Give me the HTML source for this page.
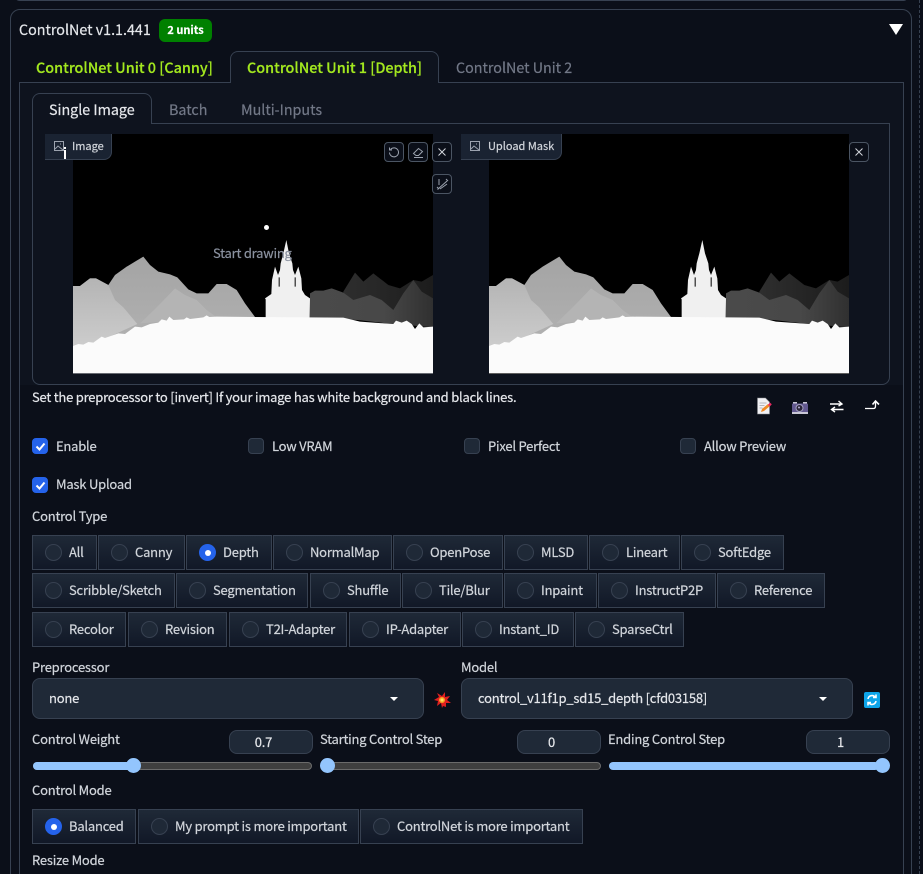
<!DOCTYPE html>
<html><head><meta charset="utf-8"><style>
html,body{margin:0;padding:0;background:#0b0f19;width:923px;height:874px;overflow:hidden;}
#w{left:0;top:0;width:923px;height:874px;overflow:hidden;font-family:"Noto Sans CJK SC","Liberation Sans",sans-serif;font-size:13px;letter-spacing:-.22px;-webkit-text-stroke:.2px;color:#d1d5db;background:#0b0f19;}
div,span{position:absolute;box-sizing:border-box;white-space:nowrap;}
svg{position:absolute;overflow:visible;}
.t{line-height:20px;height:20px;}
.big{font-size:14.3px;letter-spacing:0;}
.b{height:35px;background:linear-gradient(180deg,#1f2937,#111827);border:1px solid #374151;}
.b i{position:absolute;left:12px;top:8px;width:17px;height:17px;border-radius:50%;background:#1f2937;border:1px solid #374151;box-sizing:border-box;}
.b.on i{background:#2563eb;border-color:#2563eb;}
.b.on i:after{content:"";position:absolute;left:4.5px;top:4.5px;width:6px;height:6px;border-radius:50%;background:#fff;}
.b span{top:6px;line-height:20px;left:36px;color:#d1d5db;}
.c{width:16px;height:16px;border-radius:4px;background:#1f2937;border:1px solid #374151;}
.c.on{background:#2563eb;border-color:#2563eb;}
.ib{width:20px;height:20px;border:1px solid #4b5563;border-radius:4px;background:#0b0f19;}
.num{height:24px;top:730px;width:84px;background:#1f2937;border:1px solid #374151;border-radius:8px;text-align:center;line-height:22px;color:#e5e7eb;padding-right:15px;}
.tr{top:762px;height:8px;border-radius:4px;background:#3f3f3f;border:1px solid #6b6b6b;}
.fill{top:762px;height:8px;border-radius:4px;background:#93c5fd;}
.th{top:758px;width:15px;height:15px;border-radius:50%;background:#93c5fd;}
.dd{top:678px;height:41px;width:392px;background:#1f2937;border:1px solid #374151;border-radius:8px;}
.dd span{left:16px;top:9px;line-height:20px;color:#e5e7eb;}
.ar{width:0;height:0;border-left:4px solid transparent;border-right:4px solid transparent;border-top:4px solid #fff;}
</style></head><body>
<div id="w">
<div style="left:15px;top:-8px;width:893px;height:9px;border:1px solid #374151;border-radius:8px;"></div>
<div style="left:919px;top:0;height:874px;width:0;border-left:1px dashed #374151;"></div>
<div style="left:10px;top:9px;width:902px;height:900px;border:1px solid #374151;border-radius:10px;background:#0b0f19;"></div>
<div class="t big" style="left:19px;top:20px;color:#e5e7eb;">ControlNet v1.1.441</div>
<div style="left:159px;top:19px;width:53px;height:23px;background:#008000;border-radius:6px;color:#fff;font-size:11px;font-weight:700;text-align:center;line-height:22px;letter-spacing:0;">2 units</div>
<div style="left:889px;top:24px;width:0;height:0;border-left:7px solid transparent;border-right:7px solid transparent;border-top:11px solid #fff;"></div>

<!-- outer tabs -->
<div style="left:19px;top:82px;width:885px;height:820px;border:1px solid #374151;background:#0b0f19;"></div>
<div style="left:20px;top:83px;width:883px;height:302px;background:#0e131e;"></div>
<div style="left:230px;top:51px;width:209px;height:32px;border:1px solid #374151;border-bottom:none;border-radius:8px 8px 0 0;background:#0e131e;"></div>
<div class="t" style="left:36px;top:58px;font-size:14.4px;font-weight:500;letter-spacing:0;color:#a3e81f;">ControlNet Unit 0 [Canny]</div>
<div class="t" style="left:247px;top:58px;font-size:14.4px;font-weight:500;letter-spacing:0;color:#a3e81f;">ControlNet Unit 1 [Depth]</div>
<div class="t big" style="left:456px;top:58px;color:#727887;">ControlNet Unit 2</div>

<!-- inner tabs -->
<div style="left:32px;top:123px;width:858px;height:262px;border:1px solid #374151;border-radius:0 0 8px 8px;background:#0e131e;"></div>
<div style="left:32px;top:93px;width:120px;height:31px;border:1px solid #374151;border-bottom:none;border-radius:8px 8px 0 0;background:#0e131e;"></div>
<div class="t big" style="left:49px;top:100px;color:#e5e7eb;">Single Image</div>
<div class="t big" style="left:169px;top:100px;color:#727887;">Batch</div>
<div class="t big" style="left:241px;top:100px;color:#727887;">Multi-Inputs</div>

<div style="left:73px;top:134px;width:360px;height:239px;background:#000;"></div>
<div style="left:489px;top:134px;width:360px;height:240px;background:#000;"></div>

<svg width="0" height="0" style="left:0;top:0"><defs>
<linearGradient id="g1" x1="0" y1="0" x2="0" y2="1"><stop offset="0" stop-color="#a4a4a4"/><stop offset="1" stop-color="#b0b0b0"/></linearGradient>
<linearGradient id="g2" x1="0" y1="0" x2="0" y2="1"><stop offset="0" stop-color="#b4b4b4"/><stop offset="1" stop-color="#cdcdcd"/></linearGradient>
<linearGradient id="g3" x1="0" y1="0" x2="1" y2="0"><stop offset="0" stop-color="#2e2e2e"/><stop offset="1" stop-color="#1c1c1c"/></linearGradient>
<linearGradient id="g4" x1="0" y1="0" x2="1" y2="0"><stop offset="0" stop-color="#4a4a4a"/><stop offset=".6" stop-color="#484848"/><stop offset="1" stop-color="#303030"/></linearGradient>
<g id="scene">
<path fill="url(#g1)" d="M39 198L60 198 90 175 108 175 145 195 165 165 200 140 225 125 250 110 270 135 295 155 330 163 352 172 385 208 410 220 445 220 470 192 500 192 530 210 555 250 585 291V350H39Z"/>
<path fill="#b4b4b4" d="M240 310L290 262 345 205 375 225 410 240 440 270 470 292Z"/>
<path fill="url(#g2)" d="M39 198L60 198 90 175 108 175 145 195 165 240 190 262 232 312 100 372 39 385Z"/>
<path fill="url(#g3)" d="M850 215L885 158 910 185 940 160 985 195 1020 205 1060 180 1085 185 1119 165V300H850Z"/>
<path fill="url(#g4)" d="M750 220L765 212 790 212 815 205 850 218 880 240 930 225 965 240 1000 270 1030 220 1060 180 1085 215 1119 235V322L980 310 850 295 750 295Z"/>
<path fill="#f0f0f0" d="M617 295V238L615 235 634 222 636 180 645 140 654 165 660 150 662 130 670 100 679 60 687 100 697 130 699 150 705 165 715 140 724 175 726 210 735 225 750 235 749 295Z"/>
<path fill="#000" d="M656 172h3v28h-3zM704 172h3v28h-3z"/>
<path fill="#fbfbfb" d="M39 378L55 372 70 374 85 366 100 368 125 350 135 354 175 340 195 342 225 320 245 322 270 312 295 308 305 298 320 302 328 290 340 300 372 298 380 292 390 297 430 292 440 286 448 291 470 290 850 293 900 305 1000 312 1008 302 1025 308 1040 302 1055 312 1065 327 1078 310 1090 322 1119 320V460H39Z"/>
</g></defs></svg>
<svg style="left:60px;top:220px" width="380" height="154" viewBox="0 0 1140 462"><use href="#scene"/></svg>
<svg style="left:476px;top:220px" width="380" height="155" viewBox="0 0 1140 465"><use href="#scene"/></svg>
<div style="left:264px;top:225px;width:5px;height:5px;border-radius:50%;background:#fff;"></div>
<div class="t" style="left:213px;top:243px;color:#8b92a0;">Start drawing</div>

<!-- Labels on images -->
<div style="left:45px;top:134px;width:67px;height:26px;background:#1a2332;border:1px solid #374151;border-top:none;border-left:none;border-radius:0 0 8px 0;"></div>
<div class="t" style="left:72px;top:136px;font-size:11px;letter-spacing:0;color:#d1d5db;">Image</div>
<svg style="left:54px;top:141px" width="11" height="11" fill="none" stroke="#9ca3af" stroke-width="1"><rect x=".5" y=".5" width="9" height="9"/><path d="M1 8l3-3 5 4M6 3h1"/></svg>
<div style="left:64px;top:150px;width:2px;height:9px;background:#fff;"></div>
<div style="left:64px;top:147px;width:2px;height:2px;background:#fff;"></div>
<div style="left:461px;top:134px;width:101px;height:26px;background:#1a2332;border:1px solid #374151;border-top:none;border-left:none;border-radius:0 0 8px 0;"></div>
<div class="t" style="left:488px;top:136px;font-size:11px;letter-spacing:0;color:#d1d5db;">Upload Mask</div>
<svg style="left:470px;top:141px" width="11" height="11" fill="none" stroke="#9ca3af" stroke-width="1"><rect x=".5" y=".5" width="9" height="9"/><path d="M1 8l3-3 5 4M6 3h1"/></svg>

<div class="ib" style="left:384px;top:142px;"><svg style="left:3px;top:3px" width="12" height="12" fill="none" stroke="#9ca3af" stroke-width="1"><path d="M2.5 3.5A4.5 4.5 0 1 1 1.5 6.5M1.5 1.5v2.5h2.5"/></svg></div>
<div class="ib" style="left:408px;top:142px;"><svg style="left:3px;top:3px" width="13" height="13" fill="none" stroke="#9ca3af" stroke-width="1"><path d="M1.5 7.5l5-5 4 3-4 4H4zM2 11.5h9"/></svg></div>
<div class="ib" style="left:432px;top:142px;"><svg style="left:5px;top:5px" width="8" height="8" fill="none" stroke="#d1d5db" stroke-width="1"><path d="M.5.5l7 7M7.5.5l-7 7"/></svg></div>
<div class="ib" style="left:432px;top:174px;"><svg style="left:3px;top:3px" width="13" height="13" fill="none" stroke="#9ca3af" stroke-width="1"><path d="M1.5 11.5L11 3M3 1v6M1 9l2 2M10 1l2 2M4 11l7-5"/></svg></div>
<div class="ib" style="left:849px;top:142px;"><svg style="left:5px;top:5px" width="8" height="8" fill="none" stroke="#d1d5db" stroke-width="1"><path d="M.5.5l7 7M7.5.5l-7 7"/></svg></div>

<div class="t" style="left:32px;top:387px;color:#e5e7eb;">Set the preprocessor to [invert] If your image has white background and black lines.</div>

<!-- tool icons -->
<svg style="left:756px;top:397px" width="18" height="18"><path d="M1.5 1h8l4 4v12H1.5z" fill="#f1f1f4" stroke="#8a8a90" stroke-width=".6"/><path d="M3.5 6h7M3.5 8.5h5M3.5 11h3" stroke="#b5b5bb"/><path d="M5 15l1-3 6-5 2 2-6 5z" fill="#f08a24"/><rect x="13" y="6" width="2.5" height="3" fill="#ea2a62" transform="rotate(40 14 7)"/></svg>
<svg style="left:791px;top:401px" width="18" height="14"><path d="M2 1h4v2H2zM12 1h4v2h-4z" fill="#c9c7d6"/><rect x="1" y="2.5" width="16" height="10.5" rx="1" fill="#62588f"/><rect x="1" y="11" width="16" height="2" fill="#c9c7d6"/><circle cx="8.5" cy="7" r="3.5" fill="#2a2438" stroke="#a39fc0"/><circle cx="8" cy="6.5" r="1" fill="#b9b3d6"/></svg>
<svg style="left:829px;top:400px" width="15" height="13" fill="none" stroke="#fff" stroke-width="1.4"><path d="M1 4h12M9.5 1L13 4l-3.5 2" /><path d="M14.5 9.5H2.5M6 7L2.5 9.5 6 12"/></svg>
<svg style="left:865px;top:400px" width="16" height="11" fill="none" stroke="#fff" stroke-width="1.3"><path d="M0 8.5h8.5c1.5 0 2-1 2-2.5V2"/><path d="M7.5 4.5L10.5 1l3.5 3.5" stroke-width="1.6"/></svg>

<!-- checkboxes -->
<div class="c on" style="left:32px;top:438px;"><svg style="left:2px;top:2px" width="11" height="11" fill="none" stroke="#fff" stroke-width="2"><path d="M1.5 5.5l3 3 5-6"/></svg></div>
<div class="t" style="left:56px;top:436px;">Enable</div>
<div class="c" style="left:248px;top:438px;"></div><div class="t" style="left:272px;top:436px;">Low VRAM</div>
<div class="c" style="left:464px;top:438px;"></div><div class="t" style="left:488px;top:436px;">Pixel Perfect</div>
<div class="c" style="left:680px;top:438px;"></div><div class="t" style="left:704px;top:436px;">Allow Preview</div>
<div class="c on" style="left:32px;top:477px;"><svg style="left:2px;top:2px" width="11" height="11" fill="none" stroke="#fff" stroke-width="2"><path d="M1.5 5.5l3 3 5-6"/></svg></div>
<div class="t" style="left:56px;top:474px;">Mask Upload</div>
<div class="t" style="left:32px;top:506px;">Control Type</div>

<!-- radios -->
<div class="b" style="left:32px;top:535px;width:65px;"><i></i><span>All</span></div>
<div class="b" style="left:98px;top:535px;width:87px;"><i></i><span>Canny</span></div>
<div class="b on" style="left:186px;top:535px;width:86px;"><i></i><span>Depth</span></div>
<div class="b" style="left:273px;top:535px;width:119px;"><i></i><span>NormalMap</span></div>
<div class="b" style="left:393px;top:535px;width:110px;"><i></i><span>OpenPose</span></div>
<div class="b" style="left:504px;top:535px;width:84px;"><i></i><span>MLSD</span></div>
<div class="b" style="left:589px;top:535px;width:91px;"><i></i><span>Lineart</span></div>
<div class="b" style="left:681px;top:535px;width:103px;"><i></i><span>SoftEdge</span></div>

<div class="b" style="left:32px;top:573px;width:143px;"><i></i><span>Scribble/Sketch</span></div>
<div class="b" style="left:176px;top:573px;width:132px;"><i></i><span>Segmentation</span></div>
<div class="b" style="left:310px;top:573px;width:91px;"><i></i><span>Shuffle</span></div>
<div class="b" style="left:402px;top:573px;width:101px;"><i></i><span>Tile/Blur</span></div>
<div class="b" style="left:504px;top:573px;width:93px;"><i></i><span>Inpaint</span></div>
<div class="b" style="left:598px;top:573px;width:118px;"><i></i><span>InstructP2P</span></div>
<div class="b" style="left:717px;top:573px;width:108px;"><i></i><span>Reference</span></div>

<div class="b" style="left:32px;top:612px;width:94px;"><i></i><span>Recolor</span></div>
<div class="b" style="left:128px;top:612px;width:99px;"><i></i><span>Revision</span></div>
<div class="b" style="left:229px;top:612px;width:118px;"><i></i><span>T2I-Adapter</span></div>
<div class="b" style="left:349px;top:612px;width:112px;"><i></i><span>IP-Adapter</span></div>
<div class="b" style="left:462px;top:612px;width:112px;"><i></i><span>Instant_ID</span></div>
<div class="b" style="left:575px;top:612px;width:109px;"><i></i><span>SparseCtrl</span></div>

<div class="t" style="left:32px;top:657px;">Preprocessor</div>
<div class="t" style="left:461px;top:657px;">Model</div>
<div class="dd" style="left:32px;"><span>none</span></div>
<div class="ar" style="left:390px;top:697px;"></div>
<div class="dd" style="left:461px;"><span>control_v11f1p_sd15_depth [cfd03158]</span></div>
<div class="ar" style="left:819px;top:697px;"></div>
<svg style="left:433px;top:691px" width="18" height="18"><path d="M9 17l-1-5-4 3 1-5-4-1 5-3-2-4 5 3 3-4 0 5 5-1-3 4 4 3-5 0 0 4-3-1z" fill="#e02020"/><circle cx="9" cy="9" r="3" fill="#f5a623"/><circle cx="9" cy="9" r="1.5" fill="#ffe066"/></svg>
<div style="left:864px;top:692px;width:16px;height:16px;background:#0ea5e9;border-radius:2px;"><svg style="left:2px;top:2px" width="12" height="12" fill="none" stroke="#fff" stroke-width="1.6"><path d="M2 5a4 4 0 0 1 7-2M10 7a4 4 0 0 1-7 2M10 0.5v3H7M2 11.5v-3h3"/></svg></div>

<div class="t" style="left:32px;top:729px;">Control Weight</div>
<div class="num" style="left:229px;">0.7</div>
<div class="t" style="left:320px;top:729px;">Starting Control Step</div>
<div class="num" style="left:517px;">0</div>
<div class="t" style="left:608px;top:729px;">Ending Control Step</div>
<div class="num" style="left:806px;">1</div>

<div class="tr" style="left:33px;width:279px;"></div><div class="fill" style="left:33px;width:100px;"></div><div class="th" style="left:126px;"></div>
<div class="tr" style="left:321px;width:280px;"></div><div class="th" style="left:320px;"></div>
<div class="fill" style="left:609px;width:270px;"></div><div class="th" style="left:875px;"></div>

<div class="t" style="left:32px;top:780px;">Control Mode</div>
<div class="b on" style="left:32px;top:809px;width:104px;"><i></i><span>Balanced</span></div>
<div class="b" style="left:138px;top:809px;width:221px;"><i></i><span>My prompt is more important</span></div>
<div class="b" style="left:360px;top:809px;width:223px;"><i></i><span>ControlNet is more important</span></div>
<div class="t" style="left:32px;top:850px;">Resize Mode</div>
</div>
</body></html>
